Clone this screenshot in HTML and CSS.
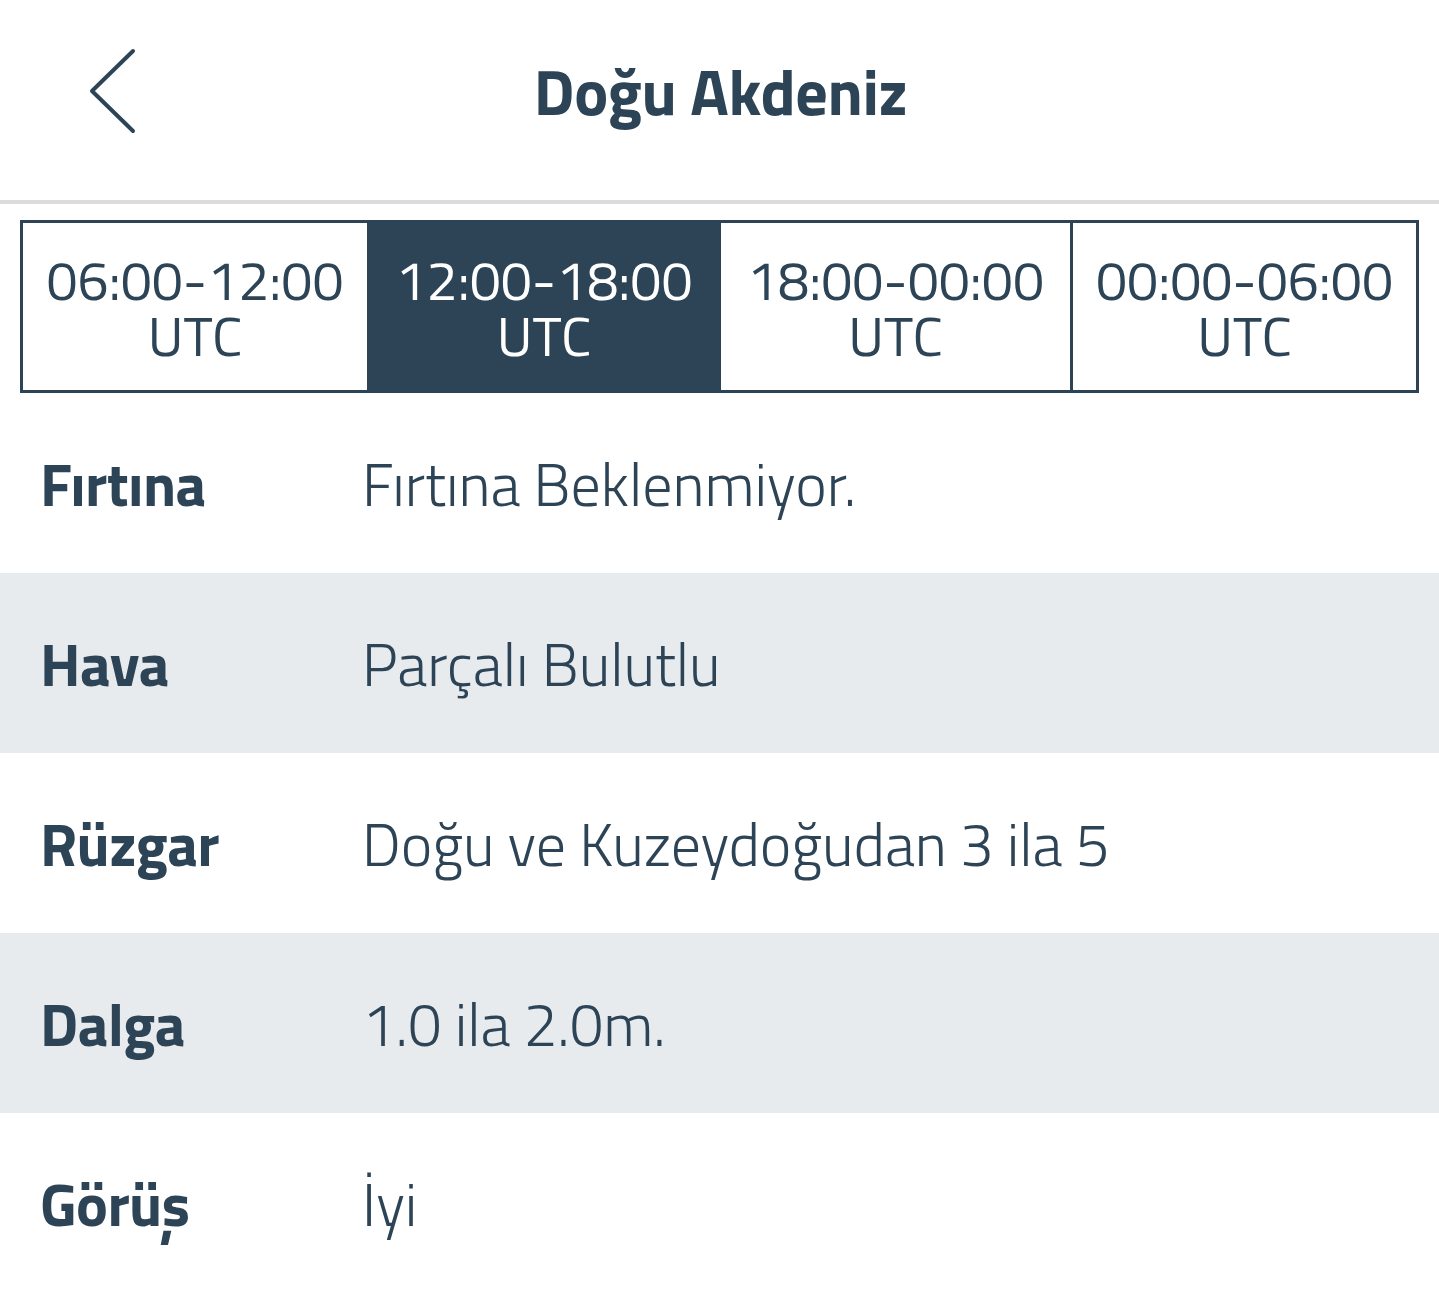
FILE: index.html
```html
<!DOCTYPE html>
<html lang="tr">
<head>
<meta charset="utf-8">
<title>Doğu Akdeniz</title>
<link rel="stylesheet" href="styles.css">
</head>
<body>
<header class="nav">
  <div class="nav-left">
    <svg class="back" width="50" height="86" viewBox="0 0 50 86" aria-hidden="true">
      <polyline points="44,3 3,43 44,83" fill="none" stroke="#2d4457" stroke-width="4" stroke-linecap="round" stroke-linejoin="round"/>
    </svg>
  </div>
  <h1 class="title">Doğu Akdeniz</h1>
  <div class="nav-right"></div>
</header>
<main>
  <div class="tabs">
    <div class="tab"><span class="line">06:00-12:00</span><span class="line">UTC</span></div>
    <div class="tab active"><span class="line">12:00-18:00</span><span class="line">UTC</span></div>
    <div class="tab"><span class="line">18:00-00:00</span><span class="line">UTC</span></div>
    <div class="tab"><span class="line">00:00-06:00</span><span class="line">UTC</span></div>
  </div>
  <div class="rows">
    <div class="row"><span class="label">Fırtına</span><span class="value">Fırtına Beklenmiyor.</span></div>
    <div class="row alt"><span class="label">Hava</span><span class="value">Parçalı Bulutlu</span></div>
    <div class="row"><span class="label">Rüzgar</span><span class="value">Doğu ve Kuzeydoğudan 3 ila 5</span></div>
    <div class="row alt"><span class="label">Dalga</span><span class="value">1.0 ila 2.0m.</span></div>
    <div class="row"><span class="label">Görüş</span><span class="value">İyi</span></div>
  </div>
</main>
</body>
</html>
```
FILE: styles.css
```css
* { box-sizing: border-box; }
html, body { margin: 0; padding: 0; background: #fff; }
body {
  font-family: "Titillium Web", "Open Sans", "Noto Sans", sans-serif;
  font-stretch: 75%;
  color: #2d4457;
  width: 1439px;
}
.nav {
  height: 204px;
  display: grid;
  grid-template-columns: 1fr auto 1fr;
  align-items: center;
  border-bottom: 4px solid #dcdcdc;
  padding-bottom: 18px;
}
.nav-left { display: flex; align-items: center; padding-left: 89px; }
.back { display: block; }
.title {
  margin: 0;
  font-size: 64px;
  font-weight: 700;
  letter-spacing: -0.4px;
  line-height: 1;
  padding-left: 2px;
}
main { padding-top: 16px; }
.tabs {
  margin: 0 20px;
  display: grid;
  grid-template-columns: 344px 354px 349px 1fr;
  border: 3px solid #2d4457;
  height: 173px;
}
.tab {
  display: flex;
  flex-direction: column;
  align-items: center;
  justify-content: center;
  text-align: center;
  font-size: 55.5px;
  font-weight: 400;
  line-height: 56px;
  border-left: 3px solid #2d4457;
  padding-top: 2px;
}
.line { display: block; white-space: nowrap; }
.tab:first-child { border-left: none; }
.tab.active { background: #2d4457; color: #fff; border-left: none; }
.tab.active + .tab { border-left: none; }
.rows { display: flex; flex-direction: column; }
.row {
  height: 180px;
  display: flex;
  align-items: center;
  padding-left: 40px;
  font-size: 60px;
  padding-top: 1px;
}
.row.alt { background: #e8ebee; }
.label { width: 322px; font-weight: 700; letter-spacing: -0.6px; }
.value { font-weight: 300; }
```
